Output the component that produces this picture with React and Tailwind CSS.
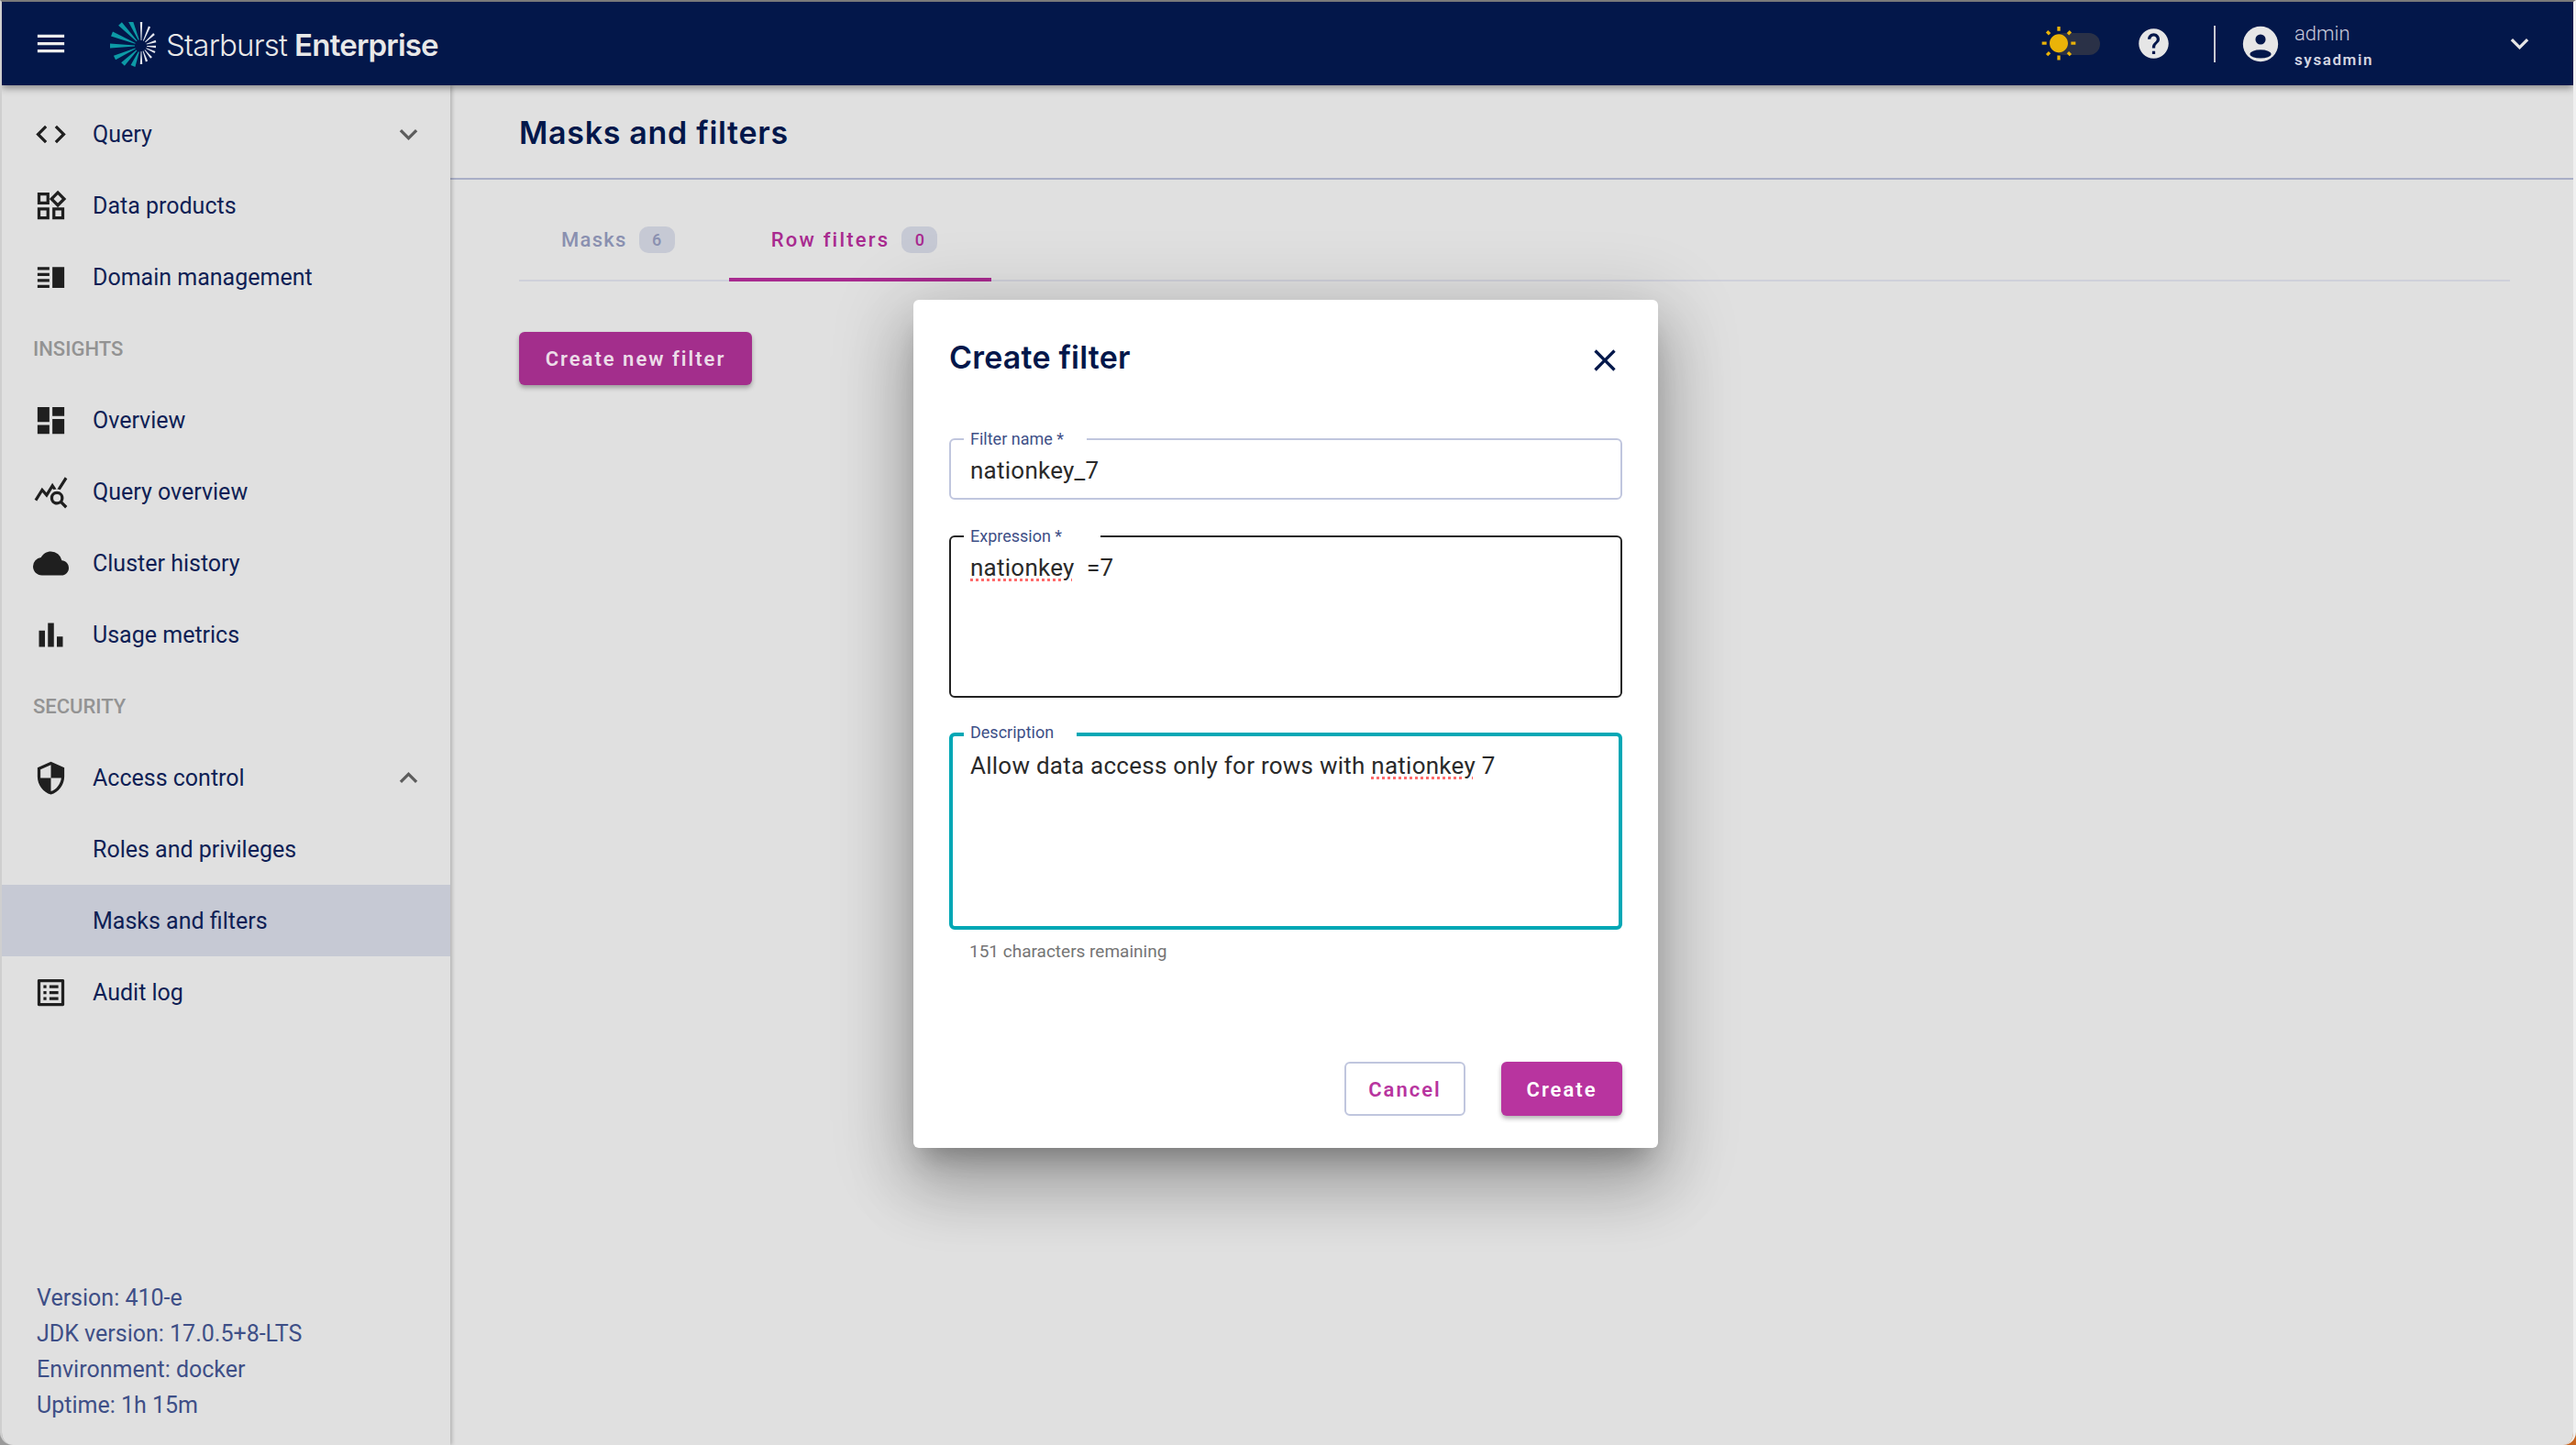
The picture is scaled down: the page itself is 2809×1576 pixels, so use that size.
import {
  MdMenu, MdCode, MdOutlineWidgets, MdVerticalSplit, MdDashboard, MdQueryStats, MdCloud, MdBarChart,
  MdSecurity, MdListAlt, MdExpandMore, MdExpandLess, MdHelp, MdWbSunny, MdClose,
} from "react-icons/md"

const tealRays = [[-34, 0], [-32, -13], [-23, -24], [-12, -28], [-29, 13], [-20, 20], [-9, 22]]
const whiteRays = [[0, -26], [9, -21], [14, -13], [16, -5], [16, 1], [15, 7], [11, 13], [6, 17], [0, 20]]

function ray(dx, dy, r0, w0, w1) {
  const len = Math.hypot(dx, dy)
  const ux = dx / len
  const uy = dy / len
  const sx = ux * r0
  const sy = uy * r0
  return [
    [sx - uy * w0, sy + ux * w0],
    [dx - uy * w1, dy + ux * w1],
    [dx + uy * w1, dy - ux * w1],
    [sx + uy * w0, sy - ux * w0],
  ].map((p) => p.join(",")).join(" ")
}

function Logo() {
  return (
    <svg width="52" height="52" viewBox="-34 -26 52 52" className="shrink-0">
      {tealRays.map(([x, y]) => <polygon key={`${x}${y}`} points={ray(x, y, 7, 0.5, 2.6)} fill="#0d9aa6" />)}
      {whiteRays.map(([x, y]) => <polygon key={`${x}${y}`} points={ray(x, y, 6, 0.4, 1.2)} fill="#e4e6ee" />)}
    </svg>
  )
}

function UserIcon() {
  return (
    <svg width="46" height="46" viewBox="0 0 24 24">
      <circle cx="12" cy="12" r="10" fill="#e6e6e6" />
      <circle cx="12" cy="9.4" r="2.9" fill="#03174a" />
      <ellipse cx="12" cy="17.7" rx="6.1" ry="2.4" fill="#03174a" />
    </svg>
  )
}

function Header() {
  return (
    <header className="relative z-20 flex h-[91px] shrink-0 items-center bg-[#03174a] pl-[34px] pr-[39px] shadow-[0_3px_8px_rgba(0,0,0,0.4)]">
      <MdMenu size={39} className="text-[#ececec]" />
      <div className="ml-[45px] mt-[5px] flex items-center">
        <Logo />
        <span className="ml-[9px] font-[Inter,sans-serif] text-[33px] font-light tracking-[-0.8px] text-[#e8e8e8]">Starburst</span>
        <span className="ml-[8px] font-[Inter,sans-serif] text-[33px] font-semibold tracking-[-0.8px] text-[#e8e8e8]">Enterprise</span>
      </div>
      <div className="ml-auto flex items-center">
        <div className="relative flex h-[24px] w-[51px] items-center">
          <div className="h-full w-full rounded-full bg-[#2a3147]" />
          <MdWbSunny size={40} className="absolute left-[-14px] top-[-8px] text-[#eab308]" />
        </div>
        <MdHelp size={39} className="ml-[39px] text-[#e6e6e6]" />
        <div className="ml-[46px] h-[40px] w-[2px] bg-[#c8c8d0]" />
        <div className="ml-[26px]"><UserIcon /></div>
        <div className="ml-[14px] flex w-[226px] flex-col pt-[6px] font-[Roboto,sans-serif]">
          <span className="text-[22px] font-light leading-[29px] text-[#c8cadc]">admin</span>
          <span className="text-[17px] font-semibold leading-[29px] tracking-[1.6px] text-[#d4d6e2]">sysadmin</span>
        </div>
        <MdExpandMore size={39} className="text-[#e6e6e6]" />
      </div>
    </header>
  )
}

function NavRow({ icon: Icon, label, caret: Caret, active }) {
  return (
    <div className={`flex h-[78px] items-center pl-[34px] pr-[26px] ${active ? "bg-[#c6c9d4]" : ""}`}>
      <div className="flex w-[65px] shrink-0 items-center">
        {Icon && <Icon size={39} className="text-[#1f1f1f]" />}
      </div>
      <span className="pt-[2px] text-[25px] text-[#0f1f55]">{label}</span>
      {Caret && <Caret size={39} className="ml-auto text-[#5c5c5c]" />}
    </div>
  )
}

function SectionLabel({ children }) {
  return (
    <div className="flex h-[78px] items-center pl-[34px] text-[22px] font-medium text-[#939393]">{children}</div>
  )
}

function Sidebar() {
  return (
    <aside className="relative z-10 flex w-[489px] shrink-0 flex-col bg-[#e0e0e0] pt-[14px] font-[Roboto,sans-serif] shadow-[2px_0_4px_rgba(0,0,0,0.2)]">
      <NavRow icon={MdCode} label="Query" caret={MdExpandMore} />
      <NavRow icon={MdOutlineWidgets} label="Data products" />
      <NavRow icon={MdVerticalSplit} label="Domain management" />
      <SectionLabel>INSIGHTS</SectionLabel>
      <NavRow icon={MdDashboard} label="Overview" />
      <NavRow icon={MdQueryStats} label="Query overview" />
      <NavRow icon={MdCloud} label="Cluster history" />
      <NavRow icon={MdBarChart} label="Usage metrics" />
      <SectionLabel>SECURITY</SectionLabel>
      <NavRow icon={MdSecurity} label="Access control" caret={MdExpandLess} />
      <NavRow label="Roles and privileges" />
      <NavRow label="Masks and filters" active />
      <NavRow icon={MdListAlt} label="Audit log" />
      <div className="mt-auto pb-[24px] pl-[38px] text-[25px] leading-[39px] text-[#3e4f87]">
        <div>Version: 410-e</div>
        <div>JDK version: 17.0.5+8-LTS</div>
        <div>Environment: docker</div>
        <div>Uptime: 1h 15m</div>
      </div>
    </aside>
  )
}

function Tab({ label, count, active, trackingClass }) {
  return (
    <div className={`-mb-[2px] flex h-[78px] items-center border-b-[4px] pb-[10px] pl-[46px] pr-[59px] ${active ? "border-[#a82a8f] text-[#a82a8f]" : "border-transparent text-[#8a90b0]"}`}>
      <span className={`text-[22px] font-medium ${trackingClass}`}>{label}</span>
      <span className="ml-[13px] flex h-[29px] w-[39px] items-center justify-center rounded-[10px] bg-[#c6c9d4] text-[18px] font-medium">{count}</span>
    </div>
  )
}

function Main() {
  return (
    <main className="flex min-w-0 flex-1 flex-col bg-[#e0e0e0] font-[Roboto,sans-serif]">
      <div className="flex h-[103px] shrink-0 items-center border-b-2 border-[#a9aec6] pl-[75px]">
        <h1 className="pt-[2px] font-[Inter,sans-serif] text-[34px] font-semibold tracking-[0.7px] text-[#03174a]">Masks and filters</h1>
      </div>
      <div className="ml-[75px] mr-[69px] mt-[33px] flex border-b-2 border-[#cfd0da]">
        <Tab label="Masks" count="6" trackingClass="tracking-[1.3px]" />
        <Tab label="Row filters" count="0" active trackingClass="tracking-[2.2px]" />
      </div>
      <button className="ml-[75px] mt-[55px] h-[58px] w-[254px] rounded-[6px] bg-[#a32e8c] text-[22px] font-semibold tracking-[2px] text-[#ecdce8] shadow-[0_3px_5px_rgba(0,0,0,0.3)]">
        Create new filter
      </button>
    </main>
  )
}

function Field({ label, borderClass, labelClass = "", boxClass, children }) {
  return (
    <fieldset className={`rounded-[6px] ${borderClass} ${boxClass}`}>
      <legend className={`pl-[7px] text-[18px] leading-[18px] text-[#3e4f87] ${labelClass}`}>{label}</legend>
      <div className="whitespace-pre-wrap px-[7px] pt-[8px] text-[26px] leading-[34px] tracking-[0.25px] text-[#2a2a2a]">{children}</div>
    </fieldset>
  )
}

function Misspelled({ children }) {
  return <span className="underline decoration-[#ff6b6b] decoration-dotted decoration-[3px] underline-offset-[3px]">{children}</span>
}

function CreateFilterDialog() {
  return (
    <div className="absolute left-[994px] top-[325px] z-10 flex h-[925px] w-[812px] flex-col rounded-[6px] bg-white px-[39px] font-[Roboto,sans-serif] shadow-[0_20px_27px_-12px_rgba(0,0,0,0.25),0_43px_68px_5px_rgba(0,0,0,0.18),0_16px_82px_14px_rgba(0,0,0,0.16)]">
      <div className="flex h-[135px] shrink-0 items-start justify-between pt-[45px]">
        <h2 className="font-[Inter,sans-serif] text-[34px] font-semibold leading-[36px] tracking-[0.2px] text-[#03174a]">Create filter</h2>
        <MdClose size={40} className="mr-[-1px] mt-[1px] text-[#03174a]" />
      </div>
      <Field label="Filter name *" borderClass="border-2 border-[#c0c6de]" boxClass="mt-[8px] h-[75px] px-[14px]" labelClass="pr-[25px]">
        nationkey_7
      </Field>
      <Field label="Expression *" borderClass="border-2 border-[#222222]" boxClass="mt-[31px] h-[185px] px-[14px]" labelClass="pr-[42px]">
        <Misspelled>nationkey</Misspelled>{"  "}=7
      </Field>
      <Field label="Description" borderClass="border-[4px] border-[#00a7b5]" boxClass="mt-[31px] h-[222px] px-[12px]" labelClass="relative -top-[2px] pr-[25px]">
        Allow data access only for rows with <Misspelled>nationkey</Misspelled> 7
      </Field>
      <p className="ml-[22px] mt-[12px] text-[19px] leading-[24px] text-[#757575]">151 characters remaining</p>
      <div className="mt-auto flex justify-end gap-[39px] pb-[35px]">
        <button className="h-[59px] w-[132px] rounded-[6px] border-2 border-[#c0c6de] bg-white pt-[1px] text-[22px] font-semibold tracking-[2px] text-[#b8349f]">Cancel</button>
        <button className="h-[59px] w-[132px] rounded-[6px] bg-[#b8349f] pt-[1px] text-[22px] font-semibold tracking-[2px] text-white shadow-[0_3px_5px_rgba(0,0,0,0.3)]">Create</button>
      </div>
    </div>
  )
}

export default function App() {
  return (
    <div className="relative h-[1576px] w-full overflow-hidden bg-[#efefef]">
      <div className="absolute bottom-0 right-0 h-[24px] w-[24px] bg-[#c8641e]" />
      <div className="absolute bottom-0 left-0 h-[24px] w-[24px] bg-[#9a9a9a]" />
      <div className="relative flex h-full flex-col overflow-hidden rounded-b-[14px] border-l-2 border-r-[3px] border-t-2 border-l-[#cfcfcf] border-r-[#efefef] border-t-[#7a7a7a]">
        <Header />
        <div className="relative flex min-h-0 flex-1">
          <Sidebar />
          <Main />
        </div>
        <CreateFilterDialog />
      </div>
    </div>
  )
}
